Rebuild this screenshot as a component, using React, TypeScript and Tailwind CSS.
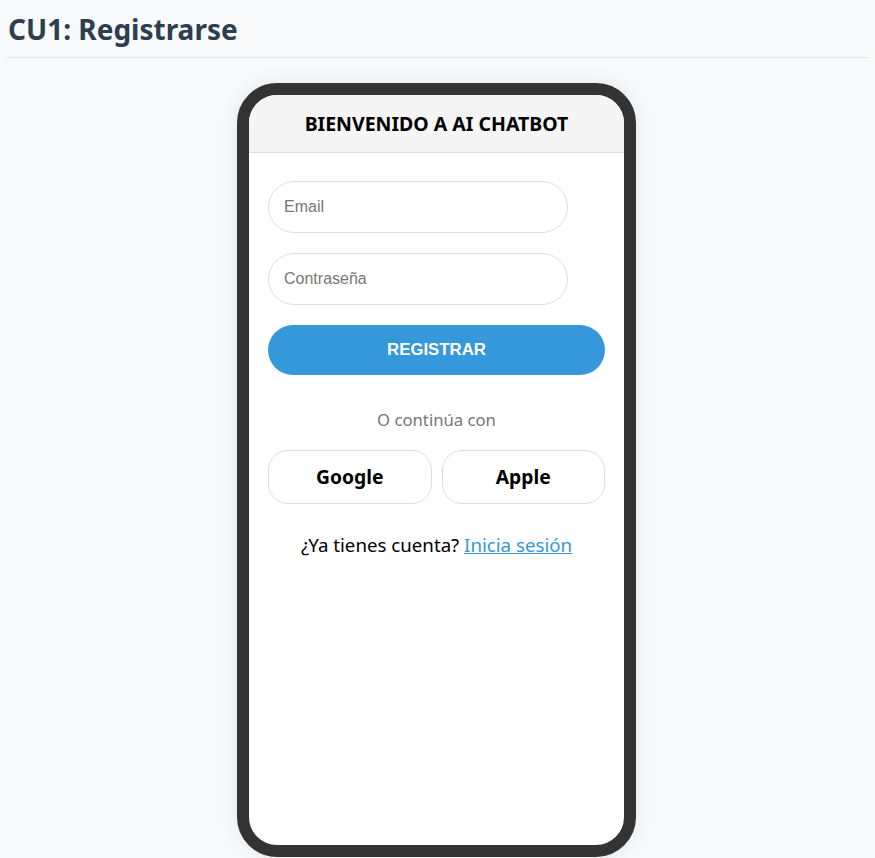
export default function App() {
  return (
    <div className="min-h-[858px] bg-[#f8f9fa] pl-[7px] pr-[7px] font-['Noto_Sans',sans-serif]">
      <h1 className="pt-[10px] pb-[9px] text-[28px] leading-[38px] font-bold text-[#2c3e50] pl-[1px]">
        CU1: Registrarse
      </h1>
      <div className="border-b border-[#dee2e6]" />

      <div className="flex justify-center pt-[25px] pr-[2px]">
        <div className="w-[399px] h-[774px] border-[12px] border-[#333] rounded-[40px] bg-white overflow-hidden shadow-[0_0_20px_rgba(0,0,0,0.08)]">
          <div className="h-[58px] flex items-center justify-center bg-[#f5f5f5] border-b border-[#ddd]">
            <span className="text-[19.5px] font-bold text-black">BIENVENIDO A AI CHATBOT</span>
          </div>

          <div className="px-[19px] pt-[28px] flex flex-col">
            <input
              placeholder="Email"
              className="w-[300px] h-[52px] px-[15px] border border-[#ddd] rounded-[26px] text-[16px] font-['Liberation_Sans',Arial,sans-serif] placeholder:text-[#777] outline-none"
            />
            <input
              type="password"
              placeholder="Contraseña"
              className="mt-[20px] w-[300px] h-[52px] px-[15px] border border-[#ddd] rounded-[26px] text-[16px] font-['Liberation_Sans',Arial,sans-serif] placeholder:text-[#777] outline-none"
            />
            <button className="mt-[20px] w-[337px] h-[50px] rounded-[25px] bg-[#3498db] text-white text-[16.8px] font-bold font-['Liberation_Sans',Arial,sans-serif]">
              REGISTRAR
            </button>

            <p className="mt-[34px] text-center text-[16.7px] text-[#777] leading-[22px] w-[337px]">O continúa con</p>

            <div className="mt-[19px] flex gap-[10px] w-[337px]">
              <button className="flex-1 h-[54px] pt-[1px] rounded-[20px] border border-[#ddd] bg-white text-[19.3px] font-bold text-black">
                Google
              </button>
              <button className="flex-1 h-[54px] pt-[1px] rounded-[20px] border border-[#ddd] bg-white text-[19.3px] font-bold text-black">
                Apple
              </button>
            </div>

            <p className="mt-[29px] text-center text-[18.7px] leading-[24px] text-black w-[337px]">
              ¿Ya tienes cuenta?{" "}
              <a href="#" className="text-[#3498db] underline">
                Inicia sesión
              </a>
            </p>
          </div>
        </div>
      </div>
    </div>
  );
}
